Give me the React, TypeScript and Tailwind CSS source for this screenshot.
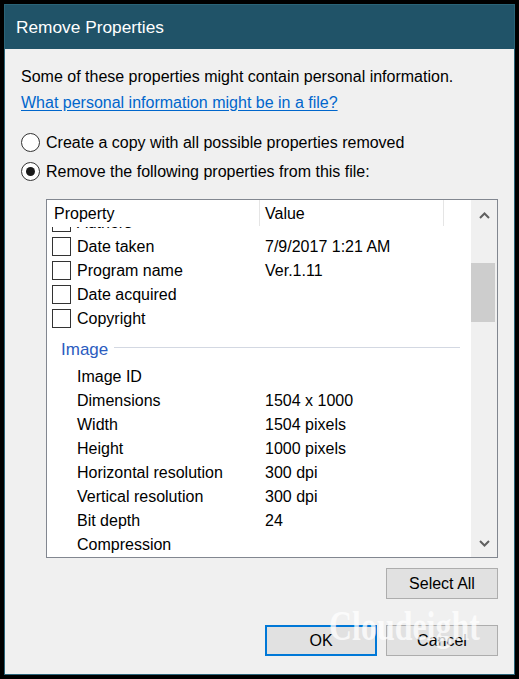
type Row = { label: string; value?: string };

const fileRows: Row[] = [
  { label: 'Authors' },
  { label: 'Date taken', value: '7/9/2017 1:21 AM' },
  { label: 'Program name', value: 'Ver.1.11' },
  { label: 'Date acquired' },
  { label: 'Copyright' },
];

const imageRows: Row[] = [
  { label: 'Image ID' },
  { label: 'Dimensions', value: '1504 x 1000' },
  { label: 'Width', value: '1504 pixels' },
  { label: 'Height', value: '1000 pixels' },
  { label: 'Horizontal resolution', value: '300 dpi' },
  { label: 'Vertical resolution', value: '300 dpi' },
  { label: 'Bit depth', value: '24' },
  { label: 'Compression' },
];

function Radio({ checked = false }: { checked?: boolean }) {
  return (
    <span className="w-[19px] h-[19px] rounded-full border border-[#333333] bg-white flex items-center justify-center shrink-0">
      {checked && <span className="w-[9px] h-[9px] rounded-full bg-[#1a1a1a]" />}
    </span>
  );
}

function Chevron({ down = false }: { down?: boolean }) {
  return (
    <svg width="11" height="7" viewBox="0 0 11 7" className={down ? 'rotate-180' : ''}>
      <polyline points="1,6 5.5,1.5 10,6" fill="none" stroke="#606060" strokeWidth="2" />
    </svg>
  );
}

function Button({ label, primary = false }: { label: string; primary?: boolean }) {
  return (
    <button
      type="button"
      className={`w-[112px] h-[31px] bg-[#e1e1e1] text-[16px] text-black flex items-center justify-center pt-px ${
        primary ? 'border-2 border-[#0078d7]' : 'border border-[#adadad]'
      }`}
    >
      {label}
    </button>
  );
}

export default function App() {
  return (
    <div className="w-[519px] h-[679px] bg-black pt-[4px] pl-[4px] font-['Liberation_Sans',Arial,sans-serif]">
      <div className="relative w-[511px] h-[671px] border border-[#2a6478] bg-[#f0f0f0] flex flex-col">
        {/* Title bar */}
        <div className="h-[44px] bg-[#205368] flex items-center pl-[11px] pt-[2px] shrink-0">
          <span className="text-[17.3px] text-white">Remove Properties</span>
        </div>

        {/* Body */}
        <div className="px-4 pt-[15px] flex flex-col text-[16px] text-black">
          <div className="h-[26px] leading-[26px]">
            Some of these properties might contain personal information.
          </div>
          <div className="h-[26px] leading-[26px]">
            <a href="#" className="text-[#0066cc] underline underline-offset-2">
              What personal information might be in a file?
            </a>
          </div>

          <div className="mt-[12px] h-[29px] flex items-center gap-[6px]">
            <Radio />
            <span>Create a copy with all possible properties removed</span>
          </div>
          <div className="h-[29px] flex items-center gap-[6px]">
            <Radio checked />
            <span>Remove the following properties from this file:</span>
          </div>

          {/* Property list */}
          <div className="ml-[25px] mt-[13px] w-[452px] h-[359px] border border-[#828790] bg-white flex">
            <div className="flex-1 flex flex-col overflow-hidden">
              <div className="h-[27px] flex shrink-0 bg-white">
                <div className="w-[213px] h-[26px] pl-[7px] pt-[2px] flex items-center border-r border-[#e5e5e5]">
                  Property
                </div>
                <div className="w-[184px] h-[26px] pl-[5px] pt-[2px] flex items-center border-r border-[#e5e5e5]">
                  Value
                </div>
              </div>
              <div className="flex-1 overflow-hidden">
                <div className="-mt-[16px]">
                  {fileRows.map((r) => (
                    <div key={r.label} className="h-[24px] flex items-center">
                      <div className="w-[213px] pl-[5px] flex items-center">
                        <span className="w-[19px] h-[19px] border border-[#333333] bg-white shrink-0 -mt-[2px]" />
                        <span className="ml-[6px]">{r.label}</span>
                      </div>
                      <div className="pl-[5px]">{r.value}</div>
                    </div>
                  ))}
                  <div className="h-[34px] flex items-center pl-[14px] mr-[11px]">
                    <span className="text-[17px] text-[#2b5cc0] mt-[3px]">Image</span>
                    <span className="flex-1 h-px bg-[#d3d8e2] ml-[6px] -mt-[2px]" />
                  </div>
                  {imageRows.map((r) => (
                    <div key={r.label} className="h-[24px] flex items-center">
                      <div className="w-[213px] pl-[30px]">{r.label}</div>
                      <div className="pl-[5px]">{r.value}</div>
                    </div>
                  ))}
                </div>
              </div>
            </div>

            {/* Scrollbar */}
            <div className="w-[26px] bg-[#f0f0f0] flex flex-col shrink-0">
              <div className="h-[31px] flex items-center justify-center shrink-0">
                <Chevron />
              </div>
              <div className="h-[32px] shrink-0" />
              <div className="w-[24px] h-[59px] bg-[#cdcdcd] shrink-0" />
              <div className="flex-1" />
              <div className="h-[27px] flex items-center justify-center shrink-0">
                <Chevron down />
              </div>
            </div>
          </div>

          <div className="mt-[10px] flex justify-end">
            <Button label="Select All" />
          </div>
          <div className="mt-[26px] flex justify-end gap-[9px]">
            <Button label="OK" primary />
            <Button label="Cancel" />
          </div>
        </div>

        {/* Watermark */}
        <div className="absolute left-[324px] top-[590px] text-[42px] font-bold text-white/75 font-['Liberation_Serif',serif] scale-x-[0.76] origin-left pointer-events-none select-none">
          Cloudeight
        </div>
      </div>
    </div>
  );
}
